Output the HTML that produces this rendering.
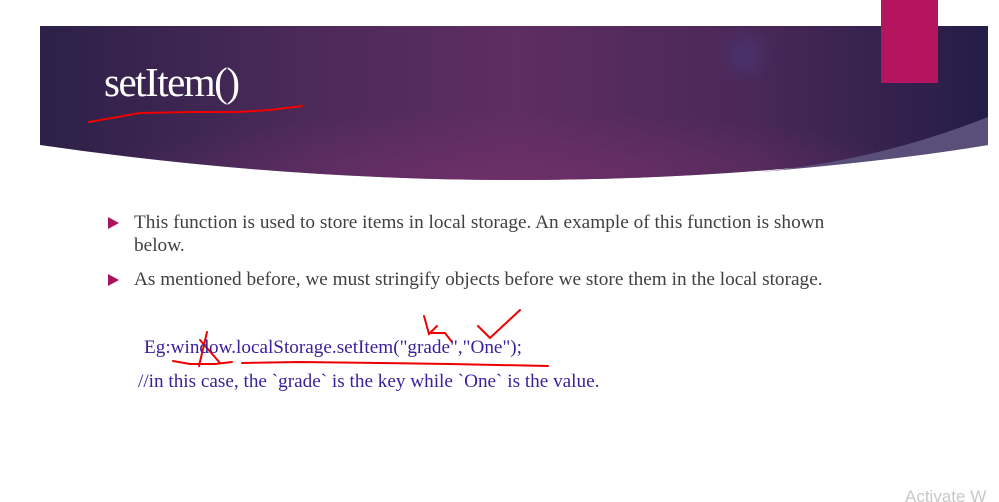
<!DOCTYPE html>
<html><head><meta charset="utf-8"><style>
html,body{margin:0;padding:0;background:#fff;width:999px;height:502px;overflow:hidden;position:relative;font-family:"Liberation Serif",serif}
.t{position:absolute;white-space:nowrap}
.b{font-size:19.3px;color:#404040}
.arr{position:absolute;width:0;height:0;border-top:6px solid transparent;border-bottom:6px solid transparent;border-left:11px solid #a8155e}
.c{font-size:19.2px;color:#3a1f9c}
</style></head><body>
<svg width="999" height="502" style="position:absolute;left:0;top:0">
<defs>
<linearGradient id="l" x1="0" x2="1" y1="0" y2="0">
<stop offset="0" stop-color="#2c2148"/>
<stop offset="0.3" stop-color="#4e2a5a"/>
<stop offset="0.5" stop-color="#5e2d62"/>
<stop offset="0.75" stop-color="#4a2858"/>
<stop offset="1" stop-color="#241d45"/>
</linearGradient>
<radialGradient id="g" cx="0.5" cy="1" r="0.45">
<stop offset="0" stop-color="#6e3068" stop-opacity="0.9"/>
<stop offset="1" stop-color="#6e3068" stop-opacity="0"/>
</radialGradient>
<radialGradient id="h" cx="0.5" cy="0.5" r="0.5"><stop offset="0" stop-color="#4a3575" stop-opacity="0.7"/><stop offset="1" stop-color="#4a3575" stop-opacity="0"/></radialGradient>
</defs>
<path d="M40 26 L988 26 L988 145 Q520 215 40 145 Z" fill="url(#l)"/>
<path d="M40 26 L988 26 L988 145 Q520 215 40 145 Z" fill="url(#g)"/>
<ellipse cx="745" cy="55" rx="30" ry="30" fill="url(#h)"/>
<path d="M988 117 Q880 160 760 172 Q900 160 988 145 Z" fill="#5a4f78"/>
<rect x="881" y="0" width="57" height="83" fill="#b5145f"/>
<g fill="none" stroke="#e00" stroke-width="2" stroke-linecap="round">
<path d="M89 122 L140 113 L190 112 L238 112 L270 110 L302 106"/>
<path d="M173 361 L190 364 L215 364 L232 362"/>
<path d="M207 332 L199 366 M200 340 L220 363"/>
<path d="M242 363 L300 362 L380 363 L450 364 L548 366"/>
<path d="M424 316 L429 334 L437 326 M429 333 L445 333 L452 342"/>
<path d="M478 326 L490 338 L520 310"/>
</g>
</svg>
<div class="t" style="left:104px;top:58px;font-size:41px;color:#fff;letter-spacing:-1.5px">setItem()</div>
<div class="arr" style="left:108px;top:217px"></div>
<div class="t b" style="left:134px;top:212px">This function is used to store items in local storage. An example of this function is shown</div>
<div class="t b" style="left:134px;top:235px">below.</div>
<div class="arr" style="left:108px;top:274px"></div>
<div class="t b" style="left:134px;top:269px">As mentioned before, we must stringify objects before we store them in the local storage.</div>
<div class="t c" style="left:144px;top:337px">Eg:window.localStorage.setItem("grade","One");</div>
<div class="t c" style="left:138px;top:371px">//in this case, the `grade` is the key while `One` is the value.</div>
<div class="t" style="left:905px;top:487px;font-family:'Liberation Sans',sans-serif;font-size:17px;color:#c8c8c8">Activate W</div>
</body></html>
